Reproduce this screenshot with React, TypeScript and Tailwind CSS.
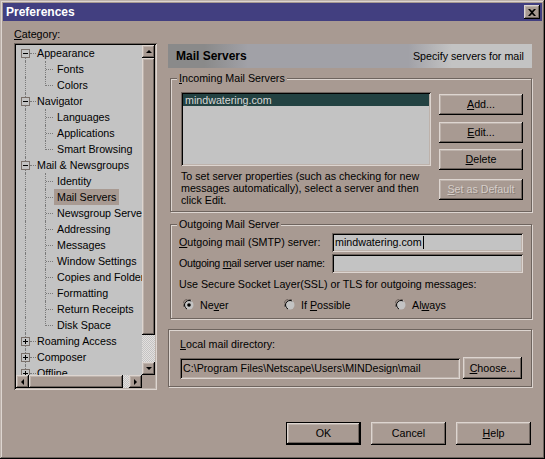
import type { ReactNode } from 'react';

const raised =
  'shadow-[inset_-1px_-1px_0_#000,inset_1px_1px_0_#ddd5d0,inset_-2px_-2px_0_#6e645e,inset_2px_2px_0_#bdb2ab]';
const sunken =
  'shadow-[inset_1px_1px_0_#6e645e,inset_-1px_-1px_0_#ddd5d0,inset_2px_2px_0_#000,inset_-2px_-2px_0_#bdb2ab]';
const etched = 'border border-[#6e645e] shadow-[inset_1px_1px_0_#ddd5d0,1px_1px_0_#ddd5d0]';
const checker =
  'bg-[repeating-conic-gradient(#c3c3c3_0_25%,#e4e0de_0_50%)] bg-[length:2px_2px]';

type Node = { label: string; top?: boolean; open?: boolean; last?: boolean; selected?: boolean };

const tree: Node[] = [
  { label: 'Appearance', top: true, open: true },
  { label: 'Fonts' },
  { label: 'Colors', last: true },
  { label: 'Navigator', top: true, open: true },
  { label: 'Languages' },
  { label: 'Applications' },
  { label: 'Smart Browsing', last: true },
  { label: 'Mail & Newsgroups', top: true, open: true },
  { label: 'Identity' },
  { label: 'Mail Servers', selected: true },
  { label: 'Newsgroup Servers' },
  { label: 'Addressing' },
  { label: 'Messages' },
  { label: 'Window Settings' },
  { label: 'Copies and Folders' },
  { label: 'Formatting' },
  { label: 'Return Receipts' },
  { label: 'Disk Space', last: true },
  { label: 'Roaming Access', top: true },
  { label: 'Composer', top: true },
  { label: 'Offline', top: true },
];

const Key = ({ children }: { children: ReactNode }) => <span className="underline underline-offset-[1px]">{children}</span>;

const Arrow = ({ dir }: { dir: 'up' | 'down' | 'left' | 'right' }) => {
  const pts = {
    up: '1,5 4,2 7,5',
    down: '1,2 4,5 7,2',
    left: '5,1 2,4 5,7',
    right: '2,1 5,4 2,7',
  }[dir];
  return (
    <svg width="8" height="8" viewBox="0 0 8 8">
      <polygon points={pts} fill="#000" />
    </svg>
  );
};

const ScrollBtn = ({ dir }: { dir: 'up' | 'down' | 'left' | 'right' }) => (
  <div className={`flex h-[13px] w-[13px] shrink-0 items-center justify-center bg-[#a89a92] ${raised}`}>
    <Arrow dir={dir} />
  </div>
);

const TreeRow = ({ node, index }: { node: Node; index: number }) => (
  <div className="relative h-[16px] whitespace-nowrap leading-[16px]">
    <span
      className={`absolute left-[9px] border-l border-dotted border-[#7a7a7a] ${
        index === 0 ? 'top-[8px] bottom-0' : 'top-0 bottom-0'
      }`}
    />
    {node.top ? (
      <>
        <span className="absolute left-[5px] top-[4px] flex h-[9px] w-[9px] items-center justify-center border border-[#7a706a] bg-[#c3c3c3]">
          <span className="absolute h-px w-[5px] bg-black" />
          {!node.open && <span className="absolute h-[5px] w-px bg-black" />}
        </span>
        <span className="absolute left-[14px] top-[8px] w-[6px] border-t border-dotted border-[#7a7a7a]" />
        <span className="absolute left-[21px] text-black">{node.label}</span>
      </>
    ) : (
      <>
        <span
          className={`absolute left-[29px] top-0 border-l border-dotted border-[#7a7a7a] ${
            node.last ? 'h-[9px]' : 'bottom-0'
          }`}
        />
        <span className="absolute left-[30px] top-[8px] w-[7px] border-t border-dotted border-[#7a7a7a]" />
        <span
          className={`absolute left-[38px] top-0 px-[3px] leading-[16px] text-black ${
            node.selected ? 'bg-[#a89a92]' : ''
          }`}
        >
          {node.label}
        </span>
      </>
    )}
  </div>
);

const Button = ({
  children,
  className = '',
  disabled = false,
  isDefault = false,
}: {
  children: ReactNode;
  className?: string;
  disabled?: boolean;
  isDefault?: boolean;
}) => (
  <div className={`${isDefault ? 'border border-black' : ''} ${className}`}>
    <div
      className={`flex h-full w-full items-center justify-center bg-[#a89a92] ${raised} ${
        disabled ? 'text-[#d6cec9] [text-shadow:1px_1px_0_#8a7f78]' : 'text-black'
      }`}
    >
      {children}
    </div>
  </div>
);

const Radio = ({ checked, children, className = '' }: { checked?: boolean; children: ReactNode; className?: string }) => (
  <div className={`flex items-center gap-[5px] ${className}`}>
    <svg width="12" height="12" viewBox="0 0 12 12">
      <path d="M1 8 A5 5 0 0 1 8 1" stroke="#6e645e" fill="none" />
      <path d="M8 1 A5 5 0 0 1 1 8" stroke="#ddd5d0" fill="none" />
      <circle cx="6" cy="6" r="4.5" fill="#c3c3c3" stroke="#000" strokeWidth="1" strokeDasharray="14 20" strokeDashoffset="-9" />
      {checked && <circle cx="6" cy="6" r="1.8" fill="#000" />}
    </svg>
    <span>{children}</span>
  </div>
);

const Group = ({ legend, className = '', children }: { legend?: ReactNode; className?: string; children: ReactNode }) => (
  <div className={`relative ${etched} ${className}`}>
    {legend && (
      <span className="absolute -top-[8px] left-[6px] bg-[#a89a92] px-[2px] leading-[14px] text-black">{legend}</span>
    )}
    {children}
  </div>
);

export default function App() {
  return (
    <div
      className="flex h-[459px] w-[545px] flex-col bg-[#a89a92] text-[10.7px] text-black shadow-[inset_-1px_-1px_0_#000,inset_1px_1px_0_#bdb2ab,inset_-2px_-2px_0_#6e645e,inset_2px_2px_0_#ddd5d0]"
      style={{ fontFamily: '"Liberation Sans", Arial, sans-serif' }}
    >
      {/* title bar */}
      <div className="mx-[3px] mt-[3px] flex h-[18px] items-center justify-between bg-[#423f80] pl-[3px] pr-[2px]">
        <span className="text-[12px] font-bold text-white">Preferences</span>
        <div className={`flex h-[14px] w-[16px] items-center justify-center bg-[#a89a92] ${raised}`}>
          <svg width="8" height="7" viewBox="0 0 8 7">
            <path d="M0 0h2l2 2 2-2h2L5 3.5 8 7H6L4 5 2 7H0l3-3.5z" fill="#000" />
          </svg>
        </div>
      </div>

      <div className="flex pl-[14px]">
        {/* category tree */}
        <div className="flex w-[143px] flex-col pt-[7px]">
          <div className="h-[15px] leading-[13px]">
            <Key>C</Key>ategory:
          </div>
          <div className={`flex h-[347px] flex-col bg-[#c3c3c3] p-[2px] ${sunken}`}>
            <div className="flex h-[330px]">
              <div className="flex-1 overflow-hidden">
                {tree.map((node, i) => (
                  <TreeRow key={node.label} node={node} index={i} />
                ))}
              </div>
              <div className="flex w-[13px] flex-col bg-[#a89a92]">
                <ScrollBtn dir="up" />
                <div className={`h-[277px] bg-[#a89a92] ${raised}`} />
                <div className={`flex-1 ${checker}`} />
                <ScrollBtn dir="down" />
              </div>
            </div>
            <div className="flex h-[13px]">
              <ScrollBtn dir="left" />
              <div className={`w-[94px] bg-[#a89a92] ${raised}`} />
              <div className={`flex-1 ${checker}`} />
              <ScrollBtn dir="right" />
              <div className="w-[13px] bg-[#a89a92]" />
            </div>
          </div>
        </div>

        {/* right panel */}
        <div className="ml-[11px] flex w-[364px] flex-col pt-[23px]">
          <div className="flex h-[24px] items-center justify-between bg-[linear-gradient(to_right,#8a8a8a_0%,#8a8a8a_10%,#a1a1a7_22%,#a1a1a7_66%,#c3c3c3_78%)] pl-[8px] pr-[8px]">
            <span className="text-[12px] font-bold">Mail Servers</span>
            <span>Specify servers for mail</span>
          </div>

          <Group legend={<><Key>I</Key>ncoming Mail Servers</>} className="ml-[2px] mt-[10px] flex h-[134px] pl-[10px]">
            <div className="flex w-[250px] flex-col pt-[13px]">
              <div className={`h-[74px] bg-[#c3c3c3] p-[2px] ${sunken}`}>
                <div className="h-[12px] bg-[#234242] pl-[2px] leading-[12px] text-[#d8d8d8]">mindwatering.com</div>
              </div>
              <p className="mt-[4px] leading-[12px]">
                To set server properties (such as checking for new
                <br />
                messages automatically), select a server and then
                <br />
                click Edit.
              </p>
            </div>
            <div className="ml-[8px] flex w-[84px] flex-col pt-[15px]">
              <Button className="h-[21px]"><Key>A</Key>dd...</Button>
              <Button className="mt-[7px] h-[21px]"><Key>E</Key>dit...</Button>
              <Button className="mt-[6px] h-[21px]"><Key>D</Key>elete</Button>
              <Button className="mt-[9px] h-[21px]" disabled><Key>S</Key>et as Default</Button>
            </div>
          </Group>

          <Group legend="Outgoing Mail Server" className="ml-[2px] mt-[12px] flex h-[95px] flex-col pl-[8px] pt-[8px]">
            <div className="flex items-center">
              <span className="w-[153px] whitespace-nowrap"><Key>O</Key>utgoing mail (SMTP) server:</span>
              <div className={`flex h-[19px] w-[191px] items-center bg-[#c3c3c3] px-[3px] ${sunken}`}>
                mindwatering.com<span className="ml-px h-[13px] w-px bg-black" />
              </div>
            </div>
            <div className="mt-[2px] flex items-center">
              <span className="w-[153px] whitespace-nowrap tracking-[-0.3px]">Outgoing <Key>m</Key>ail server user name:</span>
              <div className={`h-[19px] w-[191px] bg-[#c3c3c3] ${sunken}`} />
            </div>
            <div className="mt-[5px] leading-[13px]">Use Secure Socket Layer(SSL) or TLS for outgoing messages:</div>
            <div className="mt-[6px] flex items-center pl-[4px]">
              <Radio checked className="w-[101px]">Ne<Key>v</Key>er</Radio>
              <Radio className="w-[111px]">If <Key>P</Key>ossible</Radio>
              <Radio>Al<Key>w</Key>ays</Radio>
            </div>
          </Group>

          <Group className="mt-[10px] flex h-[58px] flex-col pl-[11px] pt-[8px]">
            <div className="leading-[13px]"><Key>L</Key>ocal mail directory:</div>
            <div className="mt-[6px] flex items-center">
              <div className={`flex h-[21px] w-[280px] items-center px-[3px] ${sunken}`}>
                C:\Program Files\Netscape\Users\MINDesign\mail
              </div>
              <Button className="ml-[3px] h-[22px] w-[59px]"><Key>C</Key>hoose...</Button>
            </div>
          </Group>
        </div>
      </div>

      {/* dialog buttons */}
      <div className="mt-[32px] flex justify-end gap-[10px] pr-[14px]">
        <Button isDefault className="h-[23px] w-[75px]">OK</Button>
        <Button className="h-[23px] w-[75px]">Cancel</Button>
        <Button className="h-[23px] w-[75px]"><Key>H</Key>elp</Button>
      </div>
    </div>
  );
}
